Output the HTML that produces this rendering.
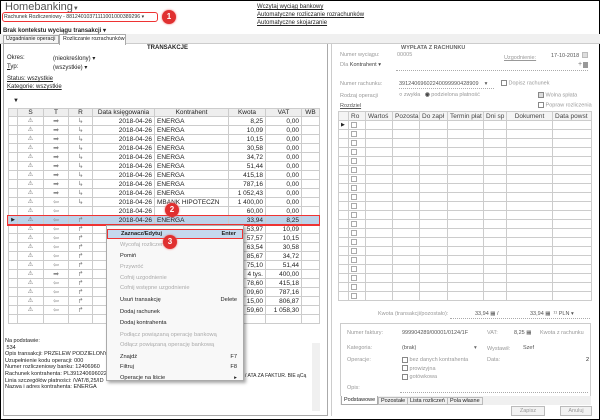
<!DOCTYPE html>
<html><head><meta charset="utf-8"><style>
*{margin:0;padding:0;box-sizing:border-box}
body{width:600px;height:420px;overflow:hidden;background:#fff;font-family:"Liberation Sans",sans-serif;font-size:6px;color:#222;position:relative}
.a{position:absolute;white-space:nowrap}
.u{text-decoration:underline}
.g{color:#999}
table{border-collapse:collapse;table-layout:fixed;position:absolute}
td{height:9px;border:1px solid #ccc;font-size:6.5px;line-height:7px;padding:0 2px;white-space:nowrap;overflow:hidden}
.lt td{text-align:center}
.lt td.r{text-align:right}
.lt td.l{text-align:left}
.lt tr.h td{height:8px;background:#eee;font-size:6.5px}
.lt td.s{color:#666;font-size:6px}
.lt td.t{color:#888;font-size:7px}
.sel td{background:#bcd3ea;border-top:1px solid #e33;border-bottom:1px solid #e33}
.m{position:absolute;left:106px;top:225px;width:138px;height:156px;background:#f8f8f8;border:1px solid #aaa;box-shadow:2px 2px 3px rgba(0,0,0,.35)}
.m div{position:absolute;left:0;width:136px;padding-left:13px;font-size:5.7px;white-space:nowrap}
.m .d{color:#aaa}
.m span{position:absolute;right:6px}
.rt td{border-color:#ccc}
.badge{position:absolute;width:14px;height:14px;border-radius:7px;background:#e03030;color:#fff;font-size:8px;text-align:center;line-height:14px;font-weight:bold;box-shadow:0 0 2px #e66}
.cb{display:inline-block;width:6px;height:6px;border:1px solid #888;vertical-align:middle}
</style></head><body>
<div class="a" style="left:0;top:0;width:600px;height:420px;border:1px solid #000"></div>
<div class="a" style="left:5px;top:1px;font-size:11px;color:#555">Homebanking<span style="font-size:6px">▼</span></div>
<div class="a" style="left:2px;top:12px;width:156px;height:10px;border:1.5px solid #e33;border-radius:3px"></div>
<div class="a" style="left:4px;top:14px;font-size:5.2px;color:#333">Rachunek Rozliczeniowy - 88124010371111001000389296 ▾</div>
<div class="badge" style="left:162px;top:10px">1</div>
<div class="a u" style="left:257px;top:4px;font-size:6px">Wczytaj wyciąg bankowy</div>
<div class="a u" style="left:257px;top:12px;font-size:6px">Automatyczne rozliczanie rozrachunków</div>
<div class="a u" style="left:257px;top:20px;font-size:6px">Automatyczne skojarzanie</div>
<div class="a" style="left:3px;top:27px;font-size:6px;font-weight:bold">Brak kontekstu wyciągu transakcji ▾</div>
<div class="a" style="left:0;top:34px;width:600px;height:10px;background:#f0f0f0;border-bottom:1px solid #ccc"></div>
<div class="a" style="left:3px;top:35px;width:56px;height:9px;border:1px solid #aaa;background:#f5f5f5;font-size:5.3px;padding-left:2px;overflow:hidden">Uzgadnianie operacji</div>
<div class="a" style="left:59px;top:34px;width:67px;height:11px;border:1px solid #aaa;border-bottom:none;background:#fff;font-size:5.3px;padding-left:3px;padding-top:1px;overflow:hidden">Rozliczanie rozrachunków</div>
<div class="a" style="left:3px;top:44px;width:325px;height:372px;border:1px solid #aaa;border-top:none"></div>
<div class="a" style="left:147px;top:45px;font-weight:bold;font-size:6px">TRANSAKCJE</div>
<div class="a" style="left:7px;top:55px">Okres:</div><div class="a" style="left:53px;top:55px">(nieokreślony) ▾</div>
<div class="a" style="left:7px;top:64px" ><span class="u">T</span>yp:</div><div class="a" style="left:53px;top:64px">(wszystkie) ▾</div>
<div class="a u" style="left:7px;top:76px">Status: wszystkie</div>
<div class="a u" style="left:7px;top:84px">Kategorie: wszystkie</div>
<div class="a" style="left:13px;top:98px;font-size:6px">▼</div>
<table class="lt" style="left:8px;top:108px;width:311px">
<colgroup><col style="width:9px"><col style="width:26px"><col style="width:25px"><col style="width:24px"><col style="width:62px"><col style="width:74px"><col style="width:37px"><col style="width:36px"><col style="width:18px"></colgroup>
<tr class="h"><td></td><td>S</td><td>T</td><td>R</td><td>Data księgowania</td><td>Kontrahent</td><td>Kwota</td><td>VAT</td><td>WB</td></tr>
<tr><td></td><td class="s">⚠</td><td class="t">➡</td><td class="t">↳</td><td class="r">2018-04-26</td><td class="l">ENERGA</td><td class="r">8,25</td><td class="r">0,00</td><td></td></tr>
<tr><td></td><td class="s">⚠</td><td class="t">➡</td><td class="t">↳</td><td class="r">2018-04-26</td><td class="l">ENERGA</td><td class="r">10,09</td><td class="r">0,00</td><td></td></tr>
<tr><td></td><td class="s">⚠</td><td class="t">➡</td><td class="t">↳</td><td class="r">2018-04-26</td><td class="l">ENERGA</td><td class="r">10,15</td><td class="r">0,00</td><td></td></tr>
<tr><td></td><td class="s">⚠</td><td class="t">➡</td><td class="t">↳</td><td class="r">2018-04-26</td><td class="l">ENERGA</td><td class="r">30,58</td><td class="r">0,00</td><td></td></tr>
<tr><td></td><td class="s">⚠</td><td class="t">➡</td><td class="t">↳</td><td class="r">2018-04-26</td><td class="l">ENERGA</td><td class="r">34,72</td><td class="r">0,00</td><td></td></tr>
<tr><td></td><td class="s">⚠</td><td class="t">➡</td><td class="t">↳</td><td class="r">2018-04-26</td><td class="l">ENERGA</td><td class="r">51,44</td><td class="r">0,00</td><td></td></tr>
<tr><td></td><td class="s">⚠</td><td class="t">➡</td><td class="t">↳</td><td class="r">2018-04-26</td><td class="l">ENERGA</td><td class="r">415,18</td><td class="r">0,00</td><td></td></tr>
<tr><td></td><td class="s">⚠</td><td class="t">➡</td><td class="t">↳</td><td class="r">2018-04-26</td><td class="l">ENERGA</td><td class="r">787,16</td><td class="r">0,00</td><td></td></tr>
<tr><td></td><td class="s">⚠</td><td class="t">➡</td><td class="t">↳</td><td class="r">2018-04-26</td><td class="l">ENERGA</td><td class="r">1 052,43</td><td class="r">0,00</td><td></td></tr>
<tr><td></td><td class="s">⚠</td><td class="t">⇦</td><td class="t">↳</td><td class="r">2018-04-26</td><td class="l">MBANK HIPOTECZN</td><td class="r">1 400,00</td><td class="r">0,00</td><td></td></tr>
<tr><td></td><td class="s">⚠</td><td class="t">⇦</td><td></td><td class="r">2018-04-26</td><td class="l"></td><td class="r">60,00</td><td class="r">0,00</td><td></td></tr>
<tr class="sel"><td style="font-size:5px">▶</td><td class="s">⚠</td><td class="t">⇦</td><td class="t">↱</td><td class="r">2018-04-26</td><td class="l">ENERGA</td><td class="r">33,94</td><td class="r">8,25</td><td></td></tr>
<tr><td></td><td class="s">⚠</td><td class="t">⇦</td><td class="t">↱</td><td></td><td></td><td class="r">53,97</td><td class="r">10,09</td><td></td></tr>
<tr><td></td><td class="s">⚠</td><td class="t">⇦</td><td class="t">↱</td><td></td><td></td><td class="r">57,57</td><td class="r">10,15</td><td></td></tr>
<tr><td></td><td class="s">⚠</td><td class="t">⇦</td><td class="t">↱</td><td></td><td></td><td class="r">63,54</td><td class="r">30,58</td><td></td></tr>
<tr><td></td><td class="s">⚠</td><td class="t">⇦</td><td class="t">↱</td><td></td><td></td><td class="r">85,67</td><td class="r">34,72</td><td></td></tr>
<tr><td></td><td class="s">⚠</td><td class="t">⇦</td><td class="t">↱</td><td></td><td></td><td class="r">75,10</td><td class="r">51,44</td><td></td></tr>
<tr><td></td><td class="s">⚠</td><td class="t">➡</td><td class="t">↱</td><td></td><td></td><td class="r">4 tys.</td><td class="r">400,00</td><td></td></tr>
<tr><td></td><td class="s">⚠</td><td class="t">⇦</td><td class="t">↱</td><td></td><td></td><td class="r">78,60</td><td class="r">415,18</td><td></td></tr>
<tr><td></td><td class="s">⚠</td><td class="t">⇦</td><td class="t">↱</td><td></td><td></td><td class="r">09,60</td><td class="r">787,16</td><td></td></tr>
<tr><td></td><td class="s">⚠</td><td class="t">⇦</td><td class="t">↱</td><td></td><td></td><td class="r">15,00</td><td class="r">806,87</td><td></td></tr>
<tr><td></td><td class="s">⚠</td><td class="t">⇦</td><td class="t">↱</td><td></td><td></td><td class="r">59,60</td><td class="r">1 058,30</td><td></td></tr>
<tr><td></td><td></td><td></td><td></td><td></td><td></td><td></td><td></td><td></td></tr>
</table>
<div class="a" style="left:7px;top:215px;width:313px;height:11px;border:1.5px solid #e33"></div>
<div class="badge" style="left:165px;top:203px">2</div>
<div class="a" style="left:5px;top:338px;font-size:5.5px;line-height:6.6px;white-space:pre">Na podstawie:
 534
Opis transakcji: PRZELEW PODZIELONY
Uzupełnienie kodu operacji: 000
Numer rozliczeniowy banku: 12406960
Rachunek kontrahenta: PL3912406960224
Linia szczegółów płatności: /VAT/8,25/ID
Nazwa i adres kontrahenta: ENERGA</div>
<div class="a" style="left:245px;top:373px;font-size:5px">/ ATA ZA FAKTUR. BIE ąCą</div>
<div class="a" style="left:312px;top:343px;width:8px;height:68px;background:#f0f0f0"></div>
<div class="m">
<div style="top:3px;left:0;width:136px;height:10px;background:#c5d9ee;border:1.5px solid #e33;font-weight:bold;padding-top:1px">Zaznacz/Edytuj<span>Enter</span></div>
<div class="d" style="top:16px">Wycofaj rozliczenie</div>
<div style="top:27px">Pomiń</div>
<div class="d" style="top:38px">Przywróć</div>
<div class="d" style="top:49px">Cofnij uzgodnienie</div>
<div class="d" style="top:59px">Cofnij wstępne uzgodnienie</div>
<div style="top:71px">Usuń transakcję<span>Delete</span></div>
<div style="top:83px">Dodaj rachunek</div>
<div style="top:94px">Dodaj kontrahenta</div>
<div class="d" style="top:106px">Podłącz powiązaną operację bankową</div>
<div class="d" style="top:116px">Odłącz powiązaną operację bankową</div>
<div style="top:128px">Znajdź<span>F7</span></div>
<div style="top:138px">Filtruj<span>F8</span></div>
<div style="top:149px">Operacje na liście<span>▸</span></div>
</div>
<div class="badge" style="left:163px;top:235px">3</div>
<!-- right panel -->
<div class="a" style="left:331px;top:44px;width:1px;height:372px;background:#ccc"></div>
<div class="a" style="left:401px;top:45px;font-weight:bold;font-size:5.5px;color:#666">WYPŁATA Z RACHUNKU</div>
<div class="a g" style="left:340px;top:52px;font-size:5.5px">Numer wyciągu:</div><div class="a g" style="left:397px;top:52px;font-size:5.5px">00005</div>
<div class="a g u" style="left:504px;top:55px;font-size:5.5px">Uzgodnienie:</div><div class="a" style="left:551px;top:53px;font-size:5.5px;color:#555">17-10-2018</div>
<div class="a" style="left:582px;top:52px;width:6px;height:6px;background:#ddd;border:1px solid #bbb"></div>
<div class="a g" style="left:340px;top:62px;font-size:5.5px">Dla <span style="color:#444">Kontrahent ▾</span></div>
<div class="a" style="left:578px;top:61px;font-size:7px;color:#777">+</div><div class="a" style="left:583px;top:62px;width:5px;height:6px;background:#999"></div>
<div class="a" style="left:396px;top:70px;width:192px;border-top:1px dotted #aaa"></div>
<div class="a g" style="left:340px;top:81px;font-size:5.5px">Numer rachunku:</div>
<div class="a" style="left:399px;top:81px;font-size:5.5px;color:#555">39124069602240099990428909&nbsp;&nbsp;&nbsp;&nbsp;▾</div>
<div class="a" style="left:399px;top:88px;width:95px;border-top:1px dotted #aaa"></div>
<div class="a g" style="left:501px;top:80px;font-size:5.5px"><span class="cb"></span> Dopisz rachunek</div>
<div class="a g" style="left:340px;top:93px;font-size:5.5px">Rodzaj operacji</div>
<div class="a g" style="left:399px;top:92px;font-size:5.5px"><b style="color:#444">○</b> zwykła &nbsp;&nbsp;<b style="color:#444">◉</b> podzielona płatność</div>
<div class="a g" style="left:538px;top:92px;font-size:5.5px"><span class="cb" style="background:#ddd"></span> Wolna spłata</div>
<div class="a g" style="left:538px;top:102px;font-size:5.5px"><span class="cb"></span> Popraw rozliczenia</div>
<div class="a u" style="left:340px;top:103px;font-size:5.5px;color:#555">Rozdziel</div>
<table class="rt" style="left:338px;top:111px;width:253px">
<colgroup><col style="width:10px"><col style="width:17px"><col style="width:27px"><col style="width:27px"><col style="width:28px"><col style="width:36px"><col style="width:23px"><col style="width:46px"><col style="width:39px"></colgroup>
<tr style="background:#f4f4f4;color:#444"><td></td><td>Ro</td><td>Wartoś</td><td>Pozosta</td><td>Do zapł</td><td>Termin płat</td><td>Dni sp</td><td style="text-align:center">Dokument</td><td>Data powst</td></tr>
<tr><td style="font-size:5px">▶</td><td><span class="cb" style="border-color:#aaa"></span></td><td></td><td></td><td></td><td></td><td></td><td></td><td></td></tr>
<tr><td></td><td><span class="cb" style="border-color:#aaa"></span></td><td></td><td></td><td></td><td></td><td></td><td></td><td></td></tr>
<tr><td></td><td><span class="cb" style="border-color:#aaa"></span></td><td></td><td></td><td></td><td></td><td></td><td></td><td></td></tr>
<tr><td></td><td><span class="cb" style="border-color:#aaa"></span></td><td></td><td></td><td></td><td></td><td></td><td></td><td></td></tr>
<tr><td></td><td><span class="cb" style="border-color:#aaa"></span></td><td></td><td></td><td></td><td></td><td></td><td></td><td></td></tr>
<tr><td></td><td><span class="cb" style="border-color:#aaa"></span></td><td></td><td></td><td></td><td></td><td></td><td></td><td></td></tr>
<tr><td></td><td><span class="cb" style="border-color:#aaa"></span></td><td></td><td></td><td></td><td></td><td></td><td></td><td></td></tr>
<tr><td></td><td><span class="cb" style="border-color:#aaa"></span></td><td></td><td></td><td></td><td></td><td></td><td></td><td></td></tr>
<tr><td></td><td><span class="cb" style="border-color:#aaa"></span></td><td></td><td></td><td></td><td></td><td></td><td></td><td></td></tr>
<tr><td></td><td><span class="cb" style="border-color:#aaa"></span></td><td></td><td></td><td></td><td></td><td></td><td></td><td></td></tr>
<tr><td></td><td><span class="cb" style="border-color:#aaa"></span></td><td></td><td></td><td></td><td></td><td></td><td></td><td></td></tr>
<tr><td></td><td><span class="cb" style="border-color:#aaa"></span></td><td></td><td></td><td></td><td></td><td></td><td></td><td></td></tr>
<tr><td></td><td><span class="cb" style="border-color:#aaa"></span></td><td></td><td></td><td></td><td></td><td></td><td></td><td></td></tr>
<tr><td></td><td><span class="cb" style="border-color:#aaa"></span></td><td></td><td></td><td></td><td></td><td></td><td></td><td></td></tr>
<tr><td></td><td><span class="cb" style="border-color:#aaa"></span></td><td></td><td></td><td></td><td></td><td></td><td></td><td></td></tr>
<tr><td></td><td><span class="cb" style="border-color:#aaa"></span></td><td></td><td></td><td></td><td></td><td></td><td></td><td></td></tr>
<tr><td></td><td><span class="cb" style="border-color:#aaa"></span></td><td></td><td></td><td></td><td></td><td></td><td></td><td></td></tr>
<tr><td></td><td><span class="cb" style="border-color:#aaa"></span></td><td></td><td></td><td></td><td></td><td></td><td></td><td></td></tr>
<tr><td></td><td><span class="cb" style="border-color:#aaa"></span></td><td></td><td></td><td></td><td></td><td></td><td></td><td></td></tr>
<tr><td></td><td><span class="cb" style="border-color:#aaa"></span></td><td></td><td></td><td></td><td></td><td></td><td></td><td></td></tr>
</table>
<div class="a g" style="left:378px;top:311px;font-size:5.5px">Kwota (transakcji/pozostało):</div>
<div class="a" style="left:475px;top:311px;font-size:5.5px;color:#555">33,94 ▦ /</div>
<div class="a" style="left:530px;top:311px;font-size:5.5px;color:#555">33,94 ▦ &nbsp;¹¹ PLN ▾</div>
<div class="a" style="left:450px;top:318px;width:140px;border-top:1px dotted #aaa"></div>
<div class="a" style="left:340px;top:323px;width:251px;height:74px;border:1px solid #ccc"></div>
<div class="a g" style="left:347px;top:330px;font-size:5.5px">Numer faktury:</div>
<div class="a" style="left:402px;top:330px;font-size:5.5px;color:#555">999904289/00001/0124/1F</div>
<div class="a g" style="left:487px;top:330px;font-size:5.5px">VAT:</div><div class="a" style="left:514px;top:330px;font-size:5.5px;color:#555">8,25 ▦</div>
<div class="a g" style="left:540px;top:330px;font-size:5.5px">Kwota z rachunku</div>
<div class="a g" style="left:347px;top:345px;font-size:5.5px">Kategoria:</div>
<div class="a" style="left:402px;top:345px;font-size:5.5px;color:#555">(brak)</div><div class="a" style="left:474px;top:345px;font-size:5.5px;color:#666">▾</div>
<div class="a g" style="left:487px;top:346px;font-size:5.5px">Wystawił:</div><div class="a" style="left:523px;top:345px;font-size:5.5px;color:#555">Szef</div>
<div class="a g" style="left:347px;top:357px;font-size:5.5px">Operacje:</div>
<div class="a g" style="left:402px;top:356px;font-size:5.5px;line-height:8.5px"><span class="cb"></span> bez danych kontrahenta<br><span class="cb"></span> prowizyjna<br><span class="cb"></span> gotówkowa</div>
<div class="a g" style="left:487px;top:357px;font-size:5.5px">Data:</div><div class="a" style="left:586px;top:357px;font-size:5.5px">2</div>
<div class="a g" style="left:347px;top:385px;font-size:5.5px">Opis:</div>
<div class="a" style="left:400px;top:392px;width:188px;border-top:1px dotted #aaa"></div>
<div class="a" style="left:340px;top:396px;width:251px;height:9px;background:#f0f0f0"></div>
<div class="a" style="left:341px;top:396px;font-size:5.5px;padding:1px 2px;background:#fff;border:1px solid #aaa;border-top:none">Podstawowe</div>
<div class="a" style="left:378px;top:397px;font-size:5.5px;padding:0 2px;border:1px solid #bbb">Pozostałe</div>
<div class="a" style="left:407px;top:397px;font-size:5.5px;padding:0 2px;border:1px solid #bbb">Lista rozliczeń</div>
<div class="a" style="left:447px;top:397px;font-size:5.5px;padding:0 2px;border:1px solid #bbb">Pola własne</div>
<div class="a g" style="left:511px;top:406px;width:34px;height:10px;border:1px solid #bbb;background:#f2f2f2;text-align:center;font-size:5.5px;line-height:8px">Zapisz</div>
<div class="a g" style="left:560px;top:406px;width:32px;height:10px;border:1px solid #bbb;background:#f2f2f2;text-align:center;font-size:5.5px;line-height:8px">Anuluj</div>
</body></html>
